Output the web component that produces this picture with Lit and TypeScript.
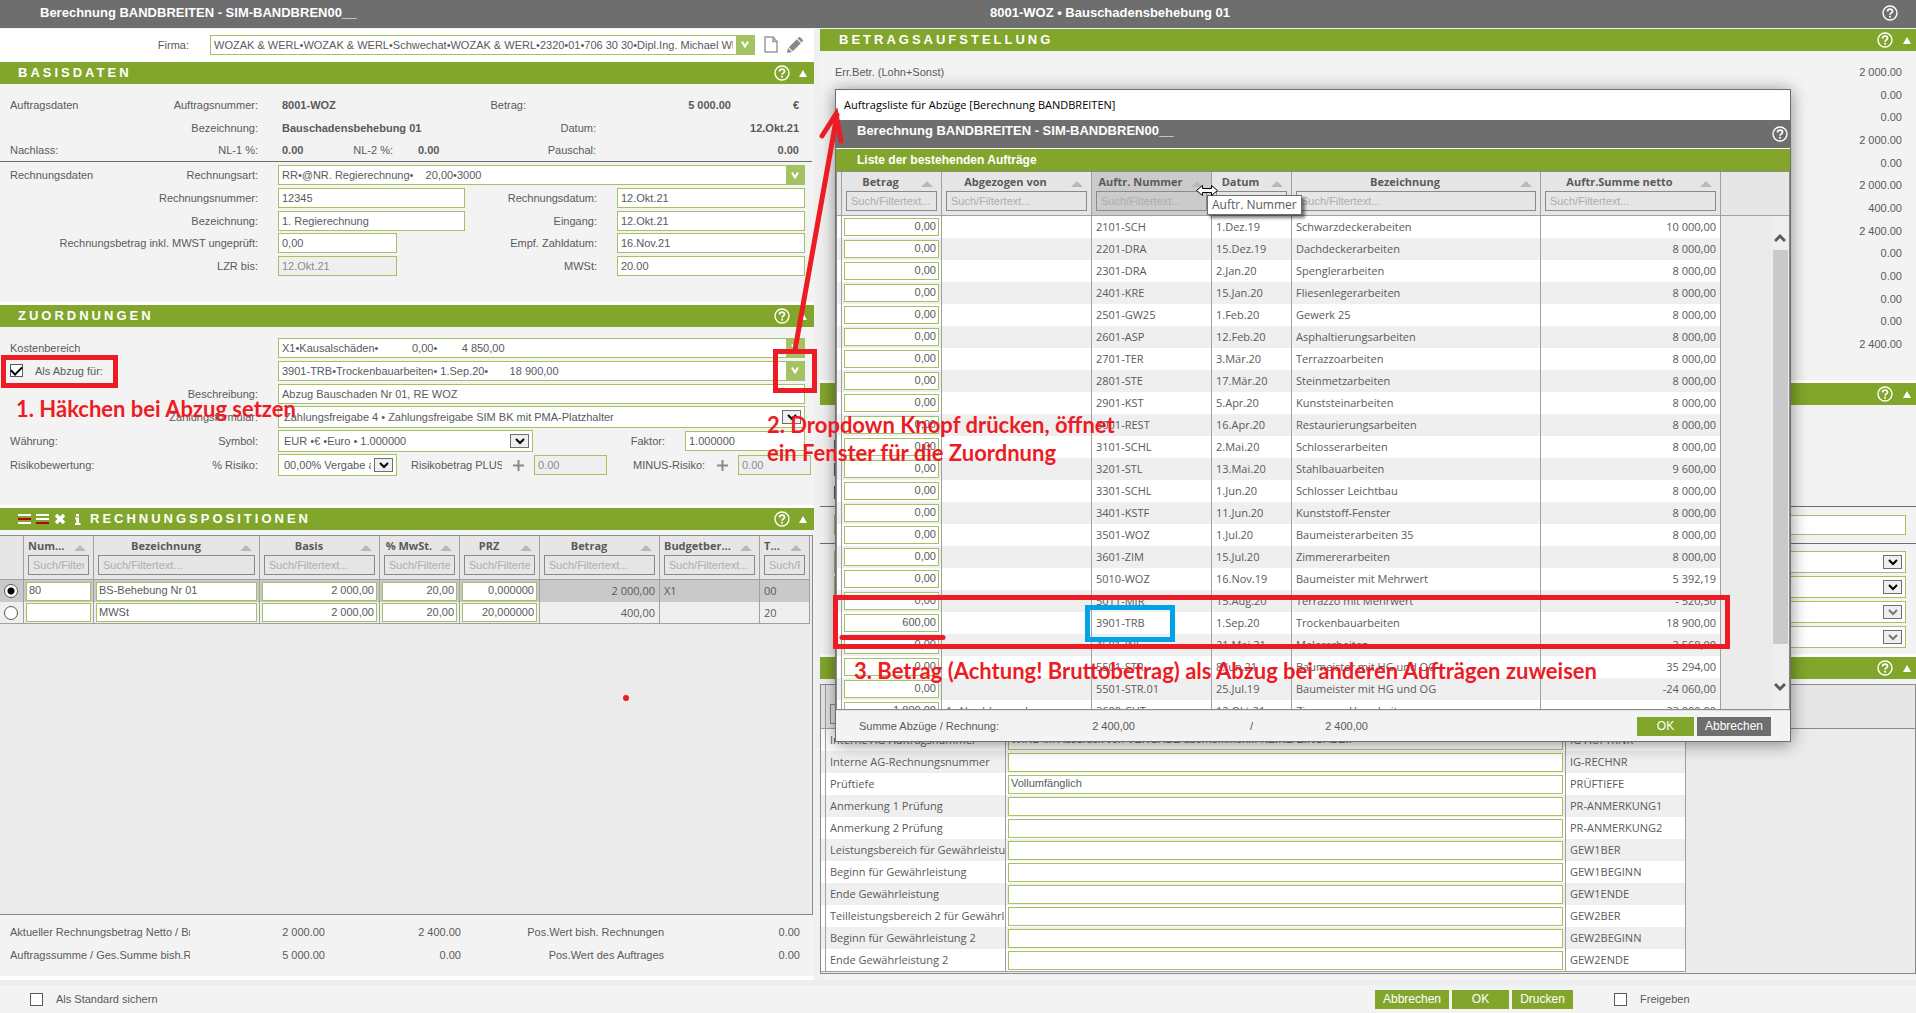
import { LitElement, html, css, svg, nothing } from "lit";
import { customElement, state } from "lit/decorators.js";
import { classMap } from "lit/directives/class-map.js";
import { styleMap } from "lit/directives/style-map.js";

const NB = "\u00a0";

interface Order {
  amount: string;
  from?: string;
  nr: string;
  date: string;
  name: string;
  sum: string;
}

const o = (nr: string, date: string, name: string, sum: string, amount = "0,00", from = ""): Order => ({
  nr, date, name, sum, amount, from,
});

const ORDERS: Order[] = [
  o("2101-SCH", "1.Dez.19", "Schwarzdeckerabeiten", "10 000,00"),
  o("2201-DRA", "15.Dez.19", "Dachdeckerarbeiten", "8 000,00"),
  o("2301-DRA", "2.Jan.20", "Spenglerarbeiten", "8 000,00"),
  o("2401-KRE", "15.Jan.20", "Fliesenlegerarbeiten", "8 000,00"),
  o("2501-GW25", "1.Feb.20", "Gewerk 25", "8 000,00"),
  o("2601-ASP", "12.Feb.20", "Asphaltierungsarbeiten", "8 000,00"),
  o("2701-TER", "3.Mär.20", "Terrazzoarbeiten", "8 000,00"),
  o("2801-STE", "17.Mär.20", "Steinmetzarbeiten", "8 000,00"),
  o("2901-KST", "5.Apr.20", "Kunststeinarbeiten", "8 000,00"),
  o("3001-REST", "16.Apr.20", "Restaurierungsarbeiten", "8 000,00"),
  o("3101-SCHL", "2.Mai.20", "Schlosserarbeiten", "8 000,00"),
  o("3201-STL", "13.Mai.20", "Stahlbauarbeiten", "9 600,00"),
  o("3301-SCHL", "1.Jun.20", "Schlosser Leichtbau", "8 000,00"),
  o("3401-KSTF", "11.Jun.20", "Kunststoff-Fenster", "8 000,00"),
  o("3501-WOZ", "1.Jul.20", "Baumeisterarbeiten 35", "8 000,00"),
  o("3601-ZIM", "15.Jul.20", "Zimmererarbeiten", "8 000,00"),
  o("5010-WOZ", "16.Nov.19", "Baumeister mit Mehrwert", "5 392,19"),
  o("5011-MIR", "15.Aug.20", "Terrazzo mit Mehrwert", "- 520,50"),
  o("3901-TRB", "1.Sep.20", "Trockenbauarbeiten", "18 900,00", "600,00"),
  o("4501-INL", "21.Mai.21", "Malerarbeiten", "3 568,00"),
  o("5501-STR", "8.Jun.21", "Baumeister mit HG und OG", "35 294,00"),
  o("5501-STR.01", "25.Jul.19", "Baumeister mit HG und OG", "-24 060,00"),
  o("3600-CHT", "12.Okt.21", "Zimmerer Vorarbeiten", "-23 000,00", "1 800,00", "1. Abschlagsrechnung"),
];

const FIELDS: [string, string, string][] = [
  ["Interne AG-Auftragsnummer", "WIRD im Ausdruck von VERGABE übernommen... KEINE EINGABE..", "IG-AUFTRNR"],
  ["Interne AG-Rechnungsnummer", "", "IG-RECHNR"],
  ["Prüftiefe", "Vollumfänglich", "PRÜFTIEFE"],
  ["Anmerkung 1 Prüfung", "", "PR-ANMERKUNG1"],
  ["Anmerkung 2 Prüfung", "", "PR-ANMERKUNG2"],
  ["Leistungsbereich für Gewährleistung", "", "GEW1BER"],
  ["Beginn für Gewährleistung", "", "GEW1BEGINN"],
  ["Ende Gewährleistung", "", "GEW1ENDE"],
  ["Teilleistungsbereich 2 für Gewährleistung", "", "GEW2BER"],
  ["Beginn für Gewährleistung 2", "", "GEW2BEGINN"],
  ["Ende Gewährleistung 2", "", "GEW2ENDE"],
];

const TOTALS = ["2 000.00", "0.00", "0.00", "2 000.00", "0.00", "2 000.00", "400.00", "2 400.00", "0.00", "0.00", "0.00", "0.00", "2 400.00"];

const POSITIONS = [
  { nr: "80", name: "BS-Behebung Nr 01", base: "2 000,00", vat: "20,00", prz: "0,000000", sum: "2 000,00", budget: "X1", t: "00" },
  { nr: "", name: "MWSt", base: "2 000,00", vat: "20,00", prz: "20,000000", sum: "400,00", budget: "", t: "20" },
];

const helpIcon = svg`<svg viewBox="0 0 16 16" width="16" height="16" fill="none" stroke="#fff" aria-hidden="true">
  <circle cx="8" cy="8" r="7" stroke-width="1.4"/>
  <path d="M5.6 6.4C5.6 4.8 6.6 4.1 8 4.1s2.5.8 2.5 2.1c0 1.7-2.4 1.7-2.4 3.5" stroke-width="1.8"/>
  <rect x="7.2" y="10.8" width="1.8" height="1.8" fill="#fff" stroke="none"/></svg>`;
const upIcon = svg`<svg viewBox="0 0 8 7" width="8" height="7" fill="#fff" aria-hidden="true"><path d="M4 0l4 7H0z"/></svg>`;
const sortIcon = svg`<svg class="sort" viewBox="0 0 12 6" width="12" height="6" fill="#b9b9b9" aria-hidden="true"><path d="M6 0l6 6H0z"/></svg>`;
const plusIcon = svg`<svg viewBox="0 0 11 11" width="11" height="11" stroke="#8a8a8a" stroke-width="2" aria-hidden="true"><path d="M5.500 0v11M0 5.500h11"/></svg>`;
const vIcon = svg`<svg viewBox="0 0 8 7" width="8" height="7" fill="none" stroke="#fff" stroke-width="2" aria-hidden="true"><path d="M1 .5l3 5 3-5"/></svg>`;
const chevIcon = svg`<svg viewBox="0 0 10 7" width="10" height="7" fill="none" stroke="currentColor" stroke-width="2" aria-hidden="true"><path d="M1 1l4 4 4-4"/></svg>`;

@customElement("app-root")
export class AppRoot extends LitElement {
  @state() private selected = 0;

  static styles = css`
    :host { display: block; font-family: "Liberation Sans", Arial, sans-serif; font-size: 11px; color: #5a5a5a; }
    * { box-sizing: border-box; }
    button, input, select { font: inherit; color: inherit; margin: 0; min-width: 0; border-radius: 0; }
    button { padding: 0; border: 0; background: none; display: inline-flex; align-items: center; justify-content: center; }
    .page { position: relative; min-height: 100vh; display: flex; flex-direction: column; background: #f3f3f3; overflow: hidden; }
    .topbar { height: 29px; background: #6e6e6e; border-bottom: 1px solid #f3f3f3; color: #fff; font-weight: bold; font-size: 13px;
      display: grid; grid-template-columns: 950fr 886fr 28px; align-items: center; padding: 0 12px 3px 40px; }
    .main { flex: 1; display: grid; grid-template-columns: 814fr 1096fr; column-gap: 6px; background: #f0f0f0; }
    .col { display: flex; flex-direction: column; min-width: 0; background: #f3f3f3; }
    .company { height: 33px; background: #fff; display: flex; align-items: center; padding: 0 11px 2px 0; }
    .company label { width: 210px; padding-right: 21px; text-align: right; }
    .company .combo { flex: 1; }
    .company .ic { margin-left: 9px; }
    .sechead { height: 22px; background: #82a62b; color: #fff; display: flex; align-items: center; padding: 0 7px 0 18px; }
    .sechead h2 { margin: 0; flex: 1; font-size: 13px; line-height: 22px; letter-spacing: 3px; font-weight: bold; }
    .sechead > button + button { margin-left: 9px; }
    .right .sechead { padding: 0 5px 0 19px; }
    .right .sechead > button + button { margin-left: 10px; }
    .tools { display: flex; gap: 5px; padding-right: 7px; align-items: center; }
    .sec { border-bottom: 3px solid #fff; }
    .data { display: grid; grid-auto-rows: 23px 23px 22px; padding-top: 9px; border-bottom: 1px solid #6e6e6e; margin-right: 2px; }
    .form1 { display: grid; grid-auto-rows: 22px 23px 23px; padding: 2px 0 25px; }
    .form2 { display: grid; grid-template-rows: 23px 23px 23px 24px 24px 24px; padding: 9px 0 28px; }
    .row { display: grid; grid-template-columns: 248px 187fr 112px 188fr; column-gap: 20px; padding: 0 9px 0 10px; align-items: center; }
    .lead { display: flex; justify-content: space-between; white-space: nowrap; }
    .lead .only { margin-left: auto; }
    .r { text-align: right; }
    .wide { grid-column: 2 / -1; }
    .bv { padding: 0 4px; font-weight: bold; }
    .sum1 { grid-column: 2 / -1; display: grid; grid-template-columns: 1fr auto 205px 68px; padding: 0 4px; }
    .nl { display: grid; grid-template-columns: 40px 75px 1fr; }
    .nl b:first-child { padding-left: 4px; }
    .nl b:last-child { padding-left: 25px; }
    .fld { height: 20px; width: 100%; border: 1px solid #a4c261; background: #fff; padding: 0 3px; outline: 0; }
    .fld:disabled { background: #efefef; color: #8c8c8c; }
    .w119 { width: 119px; }
    .combo { display: flex; height: 20px; border: 1px solid #a4c261; background: #fff; position: relative; min-width: 0; }
    .combo select { flex: 1; appearance: none; border: 0; background: none; outline: 0; padding: 0 3px; overflow: hidden; }
    .combo .v { width: 18px; background: #a4c261; display: flex; align-items: center; justify-content: center; pointer-events: none; }
    .combo.tall { height: 22px; }
    .combo.tall select { padding: 0 0 0 5px; }
    .combo .c { width: 19px; height: 14px; margin: 3px; border: 1px solid #6e6e6e; background: #efefef; color: #000;
      display: flex; align-items: center; justify-content: center; pointer-events: none; }
    .combo.off .c { color: #777; }
    .symbol { grid-column: 2 / -1; display: grid; grid-template-columns: 255fr 112fr 120fr; column-gap: 20px; align-items: center; }
    .symbol label { text-align: right; }
    .risk { grid-column: 2 / -1; display: flex; align-items: center; margin-right: -6px; white-space: nowrap; }
    .risk .cut { width: 91px; overflow: hidden; margin-left: 14px; }
    .risk .minus { margin-left: 26px; width: 73px; }
    .risk button { margin: 0 10px 0 11px; }
    .risk .fld { flex: 1; }
    .tick { appearance: none; width: 13px; height: 13px; border: 1px solid #5a5a5a; background: #fff; display: inline-grid; place-items: center; }
    .tick:checked::after { content: ""; width: 9px; height: 5px; border: solid #000; border-width: 0 0 2px 2px; transform: translateY(-1px) rotate(-45deg); }
    .deduct { display: flex; align-items: center; gap: 12px; }

    .gridbox { flex: 1; margin: 5px 1px 0 0; border: solid #8a8a8a; border-width: 1px 1px 1px 0; background: #ebebeb; min-width: 0; }
    table { border-collapse: separate; border-spacing: 0; table-layout: fixed; font-family: "Open Sans", "Noto Sans", sans-serif; font-size: 11px; }
    th { height: 44px; padding: 0 4px; background: #e6e6e6; border: solid #a0a0a0; border-width: 0 1px 1px 0; vertical-align: top; font-weight: bold; }
    th:first-child { padding: 0; }
    th.hot { background: #cbcbcb; }
    .ht { display: flex; align-items: center; height: 19px; padding-right: 4px; }
    .ht span { flex: 1; text-align: center; overflow: hidden; text-overflow: ellipsis; white-space: nowrap; margin-right: 6px; }
    .sort { flex: none; margin-top: 4px; }
    .filter { display: block; width: 100%; height: 20px; border: 1px solid #8a8a8a; background: transparent; padding: 0 4px;
      font-family: "Liberation Sans", Arial, sans-serif; font-weight: normal; outline: 0; }
    .filter::placeholder { color: #adadad; opacity: 1; }
    td { height: 22px; padding: 0 4px; border-right: 1px solid #a0a0a0; white-space: nowrap; overflow: hidden; line-height: 20px; }
    td.in { padding: 0 2px; }
    td.n { text-align: right; }
    td:first-child { padding: 0; }
    td .fld { display: block; height: 19px; font-family: "Liberation Sans", Arial, sans-serif; padding: 0 2px 2px; }
    td .fld.n { text-align: right; }
    .pos { width: 810px; }
    .pos .ht { padding-right: 3px; }
    .pos tr:last-child td { border-bottom: 1px solid #a0a0a0; }
    .pos td { background: #efefef; }
    .pos tr.sel td { background: #c9c9c9; }
    .pos td:first-child { padding: 0 4px; }
    .radio { appearance: none; display: block; width: 14px; height: 14px; border: 1px solid #555; border-radius: 50%; background: #fff; }
    .radio:checked { background: radial-gradient(circle, #000 0 3px, #fff 4px); }
    .foot { display: grid; grid-template-columns: 180px 135px 136px 203px 136px; grid-auto-rows: 23px; padding: 5px 0 10px 10px; height: 65px; align-items: center; border-bottom: 4px solid #fff; }
    .foot span { text-align: right; white-space: nowrap; overflow: hidden; }
    .foot span:first-child, .foot .l { text-align: left; }

    .totals { display: grid; grid-auto-rows: 23px 23px 22px; padding: 9px 14px 28px 15px; height: 329px; align-content: start; }
    .totals div { display: flex; justify-content: space-between; align-items: center; }
    .mid { height: 249px; padding-top: 35px; }
    .checks { display: flex; flex-direction: column; gap: 10px; padding: 0 14px 4px; height: 66px; }
    .line { border: solid #6e6e6e; border-width: 1px 0; height: 38px; padding: 8px 10px 0 14px; }
    .selects { display: flex; flex-direction: column; gap: 3px; padding: 7px 10px 0 14px; }
    .right .gridbox { border-left: 1px solid #8a8a8a; margin: 5px 0 6px; flex: 1; }
    .keys { width: 865px; border-bottom: 1px solid #a0a0a0; }
    .keys tr td { background: #fff; }
    .keys tr:nth-child(even) td { background: #efefef; }
    .keywrap { background: linear-gradient(#e6e6e6 0 43px, #8a8a8a 43px 44px, #ebebeb 44px); }
    .keywrap th { background: none; }

    .bottom { height: 33px; border-top: 5px solid #ededed; background: #f3f3f3; display: flex; align-items: center; padding: 0 10px 0 30px; }
    .bottom label { margin-left: 13px; }
    .btns { margin-left: auto; display: flex; gap: 3px; }
    .btn { height: 19px; background: #82a62b; color: #fff; font-size: 12px; width: 57px; }
    .btn.gray { background: #6e6e6e; }
    .btn.l { width: 74px; }
    .btn.m { width: 61px; }
    .free { width: 292px; margin-left: 41px; display: flex; align-items: center; }

    .dialog { position: absolute; left: 835px; right: 125px; top: 89px; height: 653px; border: 1px solid #6e6e6e; background: #f3f3f3;
      box-shadow: 0 2px 16px rgba(0, 0, 0, .45); display: flex; flex-direction: column; }
    .dtitle { height: 30px; background: #fff; color: #000; padding: 0 8px; line-height: 30px; font-family: "Open Sans", "Noto Sans", sans-serif; font-size: 11px; margin: 0; font-weight: normal; }
    .dbar { height: 29px; background: #6e6e6e; color: #fff; border-bottom: 1px solid #fff; display: flex; justify-content: space-between; align-items: center;
      padding: 0 2px 8px 21px; font-size: 13px; font-weight: bold; }
    .dbar button { margin-top: 8px; }
    .dsub { height: 22px; background: #82a62b; color: #fff; padding-left: 21px; font-size: 12px; font-weight: bold; line-height: 22px; }
    .dbody { flex: 1; display: flex; min-height: 0; overflow: hidden; border: 1px solid #8a8a8a; background: #ebebeb; position: relative; }
    .dtable { width: 100%; height: 100%; }
    .dtable tbody td { background: #fff; height: 22px; line-height: 20px; }
    .dtable tbody tr:nth-child(even) td { background: #efefef; }
    .dtable tbody tr td:last-child, .dtable tbody tr:nth-child(even) td:last-child { background: #ebebeb; border: 0; }
    .dtable th:last-child { border-right: 0; }
    .dtable td .fld { height: 18px; padding-bottom: 2px; }
    .dwrap { flex: 1; min-width: 0; height: 537px; overflow: hidden; }
    .scroll { position: absolute; right: 1px; top: 45px; bottom: 0; width: 16px; background: #efefef; display: flex; flex-direction: column; align-items: center; }
    .scroll svg { margin: 16px 0 7px; }
    .thumb { width: 15px; height: 394px; background: #c9c9c9; }
    .scroll .dn { margin: 38px 0 0; }
    .dfoot { height: 31px; display: grid; grid-template-columns: 180px 96px 118px 115px 1fr auto; align-items: center; padding: 0 19px 0 23px; border-top: 1px solid #e0e0e0; }

    .tip { position: absolute; left: 1207px; top: 195px; height: 20px; padding: 0 4px; background: #fff; border: 1px solid #6e6e6e; line-height: 18px;
      font-family: "Open Sans", "Noto Sans", sans-serif; font-size: 12px; box-shadow: 3px 3px 3px rgba(0, 0, 0, .5); }
    .marks { position: absolute; left: 0; top: 0; pointer-events: none; }
    .note { position: absolute; margin: 0; color: #ed1c24; font-family: Lato, "Open Sans", sans-serif; font-weight: bold; font-size: 22px; line-height: 28px; white-space: nowrap; pointer-events: none; }
    .n1 { left: 16px; top: 395px; }
    .n2 { left: 767px; top: 411px; }
    .n3 { left: 854px; top: 657px; }
  `;

  private head(title: string, tools: unknown = nothing) {
    return html`<header class="sechead">${tools}<h2>${title}</h2>
      <button aria-label="Hilfe">${helpIcon}</button><button aria-label="Einklappen">${upIcon}</button></header>`;
  }

  private combo(id: string, text: string, label: string | null = null, kind = "v", extra = "") {
    return html`<div class="combo ${kind === "v" ? "" : "tall"} ${extra}">
      <select id=${id} aria-label=${label ?? nothing}><option>${text}</option></select>
      <span class=${kind}>${kind === "v" ? vIcon : chevIcon}</span></div>`;
  }

  private th(title: string, hot = false) {
    return html`<th class=${classMap({ hot })}><div class="ht"><span>${title}</span>${sortIcon}</div>
      <input class="filter" placeholder="Such/Filtertext..." aria-label="Filter ${title}"></th>`;
  }

  private cols(widths: (number | null)[]) {
    return html`<colgroup>${widths.map((w) => html`<col style=${styleMap(w ? { width: `${w}px` } : {})}>`)}</colgroup>`;
  }

  private basis() {
    return html`<section class="sec">${this.head("BASISDATEN")}
      <div class="data">
        <div class="row"><div class="lead"><span>Auftragsdaten</span><span>Auftragsnummer:</span></div>
          <div class="sum1"><b>8001-WOZ</b><span>Betrag:</span><b class="r">5 000.00</b><b class="r">€</b></div></div>
        <div class="row"><div class="lead"><span class="only">Bezeichnung:</span></div><b class="bv">Bauschadensbehebung 01</b><span class="r">Datum:</span><b class="bv r">12.Okt.21</b></div>
        <div class="row"><div class="lead"><span>Nachlass:</span><span>NL-1 %:</span></div>
          <div class="nl"><b>0.00</b><span class="r">NL-2 %:</span><b>0.00</b></div><span class="r">Pauschal:</span><b class="bv r">0.00</b></div>
      </div>
      <div class="form1">
        <div class="row"><div class="lead"><span>Rechnungsdaten</span><label for="art">Rechnungsart:</label></div>
          <div class="wide">${this.combo("art", `RR•@NR. Regierechnung•${NB.repeat(4)}20,00•3000`)}</div></div>
        <div class="row"><div class="lead"><label class="only" for="renr">Rechnungsnummer:</label></div><input class="fld" id="renr" value="12345">
          <label class="r" for="redat">Rechnungsdatum:</label><input class="fld" id="redat" value="12.Okt.21"></div>
        <div class="row"><div class="lead"><label class="only" for="bez">Bezeichnung:</label></div><input class="fld" id="bez" value="1. Regierechnung">
          <label class="r" for="ein">Eingang:</label><input class="fld" id="ein" value="12.Okt.21"></div>
        <div class="row"><div class="lead"><label class="only" for="betr">Rechnungsbetrag inkl. MWST ungeprüft:</label></div><input class="fld w119" id="betr" value="0,00">
          <label class="r" for="zahl">Empf. Zahldatum:</label><input class="fld" id="zahl" value="16.Nov.21"></div>
        <div class="row"><div class="lead"><label class="only" for="lzr">LZR bis:</label></div><input class="fld w119" id="lzr" value="12.Okt.21" disabled>
          <label class="r" for="mwst">MWSt:</label><input class="fld" id="mwst" value="20.00"></div>
      </div></section>`;
  }

  private assign() {
    return html`<section class="sec">${this.head("ZUORDNUNGEN")}
      <div class="form2">
        <div class="row"><label for="kb">Kostenbereich</label><div class="wide">${this.combo("kb", `X1•Kausalschäden•${NB.repeat(11)}0,00•${NB.repeat(8)}4 850,00`)}</div></div>
        <div class="row"><div class="deduct"><input class="tick" type="checkbox" id="abz" checked><label for="abz">Als Abzug für:</label></div>
          <div class="wide">${this.combo("abzf", `3901-TRB•Trockenbauarbeiten• 1.Sep.20•${NB.repeat(7)}18 900,00`, "Abzug für")}</div></div>
        <div class="row"><div class="lead"><label class="only" for="besch">Beschreibung:</label></div><input class="fld wide" id="besch" value="Abzug Bauschaden Nr 01, RE WOZ"></div>
        <div class="row"><div class="lead"><label class="only" for="zf">Zahlungsformular:</label></div>
          <div class="wide">${this.combo("zf", "Zahlungsfreigabe 4 • Zahlungsfreigabe SIM BK mit PMA-Platzhalter", null, "c")}</div></div>
        <div class="row"><div class="lead"><span>Währung:</span><label for="sym">Symbol:</label></div>
          <div class="symbol">${this.combo("sym", "EUR •€ •Euro • 1.000000", null, "c")}<label for="fak">Faktor:</label><input class="fld" id="fak" value="1.000000"></div></div>
        <div class="row"><div class="lead"><span>Risikobewertung:</span><label for="ris">% Risiko:</label></div>
          <div class="risk">${this.combo("ris", "00,00% Vergabe aktuell", null, "c", "w119")}
            <label class="cut" for="rp">Risikobetrag PLUS:</label><button aria-label="Plus erhöhen">${plusIcon}</button><input class="fld" id="rp" value="0.00" disabled>
            <label class="minus" for="rm">MINUS-Risiko:</label><button aria-label="Minus erhöhen">${plusIcon}</button><input class="fld" id="rm" value="0.00" disabled></div></div>
      </div></section>`;
  }

  private positions() {
    const bars = (a: string, b: string, c: string) => svg`<svg viewBox="0 0 13 11" width="13" height="11" aria-hidden="true">
      <rect width="13" height="2" fill=${a}/><rect y="4" width="13" height="2" fill=${b}/><rect y="8" width="13" height="2" fill=${c}/></svg>`;
    const tools = html`<div class="tools">
      <button aria-label="Zeile einfügen">${bars("#fff", "#b80000", "#fff")}</button>
      <button aria-label="Zeile anhängen">${bars("#fff", "#fff", "#b80000")}</button>
      <button aria-label="Löschen"><svg viewBox="0 0 12 12" width="12" height="12" stroke="#fff" stroke-width="3.500" aria-hidden="true"><path d="M2 2l8 8M10 2l-8 8"/></svg></button>
      <button aria-label="Info"><svg viewBox="0 0 12 12" width="12" height="12" fill="#fff" aria-hidden="true"><path d="M5 1h3v2.500H5zM4 4.500h4V10h1.500v2H4v-2h1.200V6.300H4z"/></svg></button></div>`;
    return html`${this.head("RECHNUNGSPOSITIONEN", tools)}
      <div class="gridbox"><table class="pos">${this.cols([24, 70, 166, 120, 80, 80, 120, 100, 50])}
        <thead><tr><th></th>${["Nummer", "Bezeichnung", "Basis", "% MwSt.", "PRZ", "Betrag", "Budgetbereich", "Typ."].map((t) => this.th(t))}</tr></thead>
        <tbody>${POSITIONS.map((p, i) => html`<tr class=${classMap({ sel: i === this.selected })}>
          <td><input class="radio" type="radio" name="pos" aria-label="Position ${i + 1}" .checked=${i === this.selected} @change=${() => (this.selected = i)}></td>
          <td class="in"><input class="fld" aria-label="Nummer" value=${p.nr}></td><td class="in"><input class="fld" aria-label="Bezeichnung" value=${p.name}></td>
          ${[p.base, p.vat, p.prz].map((v, k) => html`<td class="in"><input class="fld n" aria-label=${["Basis", "MwSt.", "PRZ"][k]} value=${v}></td>`)}
          <td class="n">${p.sum}</td><td>${p.budget}</td><td>${p.t}</td></tr>`)}</tbody></table></div>
      <div class="foot"><span>Aktueller Rechnungsbetrag Netto / Brutto</span><span>2 000.00</span><span>2 400.00</span><span>Pos.Wert bish. Rechnungen</span><span>0.00</span>
        <span class="l">Auftragssumme / Ges.Summe bish.Rechn.</span><span>5 000.00</span><span>0.00</span><span>Pos.Wert des Auftrages</span><span>0.00</span></div>`;
  }

  private rightCol() {
    return html`<div class="col right">
      <section class="sec">${this.head("BETRAGSAUFSTELLUNG")}
        <div class="totals">${TOTALS.map((t, i) => html`<div><span>${i === 0 ? "Err.Betr. (Lohn+Sonst)" : ""}</span><span>${t}</span></div>`)}</div></section>
      <section class="sec">${this.head("")}
        <div class="mid"><div class="checks">${[1, 2, 3].map((n) => html`<input class="tick" type="checkbox" aria-label="Option ${n}">`)}</div>
          <div class="line"><input class="fld" aria-label="Bemerkung"></div>
          <div class="selects">${[0, 1, 2, 3].map((n) => this.combo(`s${n}`, "", `Auswahl ${n + 1}`, "c", n > 1 ? "off" : ""))}</div></div></section>
      ${this.head("")}
      <div class="gridbox keywrap"><table class="keys">${this.cols([5, 180, 560, 120])}
        <thead><tr><th></th><th><div class="ht"></div><input class="filter" aria-label="Filter Feld"></th><th></th><th></th></tr></thead>
        <tbody>${FIELDS.map(([a, b, c]) => html`<tr><td></td><td>${a}</td><td class="in"><input class="fld" aria-label=${a} value=${b}></td><td>${c}</td></tr>`)}</tbody></table></div>
    </div>`;
  }

  private dialog() {
    return html`<section class="dialog" role="dialog" aria-labelledby="dt">
      <h1 class="dtitle" id="dt">Auftragsliste für Abzüge [Berechnung BANDBREITEN]</h1>
      <div class="dbar"><span>Berechnung BANDBREITEN - SIM-BANDBREN00__</span><button aria-label="Hilfe">${helpIcon}</button></div>
      <div class="dsub">Liste der bestehenden Aufträge</div>
      <div class="dbody"><div class="dwrap"><table class="dtable">${this.cols([5, 100, 150, 120, 80, null, 180, 68])}
        <thead><tr><th></th>${this.th("Betrag")}${this.th("Abgezogen von")}${this.th("Auftr. Nummer", true)}${this.th("Datum")}${this.th("Bezeichnung")}${this.th("Auftr.Summe netto")}<th></th></tr></thead>
        <tbody>${ORDERS.map((r) => html`<tr><td></td><td class="in"><input class="fld n" aria-label="Betrag ${r.nr}" value=${r.amount}></td><td>${r.from}</td>
          <td>${r.nr}</td><td>${r.date}</td><td>${r.name}</td><td class="n">${r.sum}</td><td></td></tr>`)}</tbody></table></div>
        <div class="scroll"><svg viewBox="0 0 12 10" width="12" height="10" fill="none" stroke="#5a5a5a" stroke-width="3" aria-hidden="true"><path d="M1 8l5-5 5 5"/></svg>
          <div class="thumb"></div><svg class="dn" viewBox="0 0 12 10" width="12" height="10" fill="none" stroke="#5a5a5a" stroke-width="3" aria-hidden="true"><path d="M1 2l5 5 5-5"/></svg></div>
      </div>
      <div class="dfoot"><span>Summe Abzüge / Rechnung:</span><span class="r">2 400,00</span><span class="r">/</span><span class="r">2 400,00</span><span></span>
        <div class="btns"><button class="btn">OK</button><button class="btn gray l">Abbrechen</button></div></div>
    </section>
    <div class="tip" role="tooltip">Auftr. Nummer</div>`;
  }

  render() {
    return html`<div class="page">
      <header class="topbar"><span>Berechnung BANDBREITEN - SIM-BANDBREN00__</span><span>8001-WOZ • Bauschadensbehebung 01</span><button aria-label="Hilfe">${helpIcon}</button></header>
      <main class="main">
        <div class="col">
          <div class="company"><label for="firma">Firma:</label>
            ${this.combo("firma", "WOZAK & WERL•WOZAK & WERL•Schwechat•WOZAK & WERL•2320•01•706 30 30•Dipl.Ing. Michael WERL")}
            <button class="ic" aria-label="Neu"><svg viewBox="0 0 14 17" width="14" height="17" fill="#fff" stroke="#9a9a9a" stroke-width="1.500" aria-hidden="true"><path d="M1 1h8l4 4.500V16H1zM9 1v4.500h4"/></svg></button>
            <button class="ic" aria-label="Bearbeiten"><svg viewBox="0 0 16 16" width="16" height="16" fill="#8a8a8a" aria-hidden="true"><path d="M0 16l1-5 4 4zM1.800 10.200l8-8 4 4-8 8zM10.600 1.400L12 0q1 0 1.500.500l2 2Q16 3 16 4l-1.400 1.400z"/></svg></button></div>
          ${this.basis()}${this.assign()}${this.positions()}
        </div>
        ${this.rightCol()}
      </main>
      <footer class="bottom"><input class="tick" type="checkbox" id="std"><label for="std">Als Standard sichern</label>
        <div class="btns"><button class="btn l">Abbrechen</button><button class="btn">OK</button><button class="btn m">Drucken</button></div>
        <div class="free"><input class="tick" type="checkbox" id="frei"><label for="frei">Freigeben</label></div></footer>
      ${this.dialog()}
      <svg class="marks" width="1740" height="710" fill="none" stroke="#ed1c24" stroke-width="5" aria-hidden="true">
        <rect x="3.500" y="357.500" width="112" height="28"/><rect x="775.500" y="351.500" width="39" height="39"/>
        <path d="M795 350L837 115M822 136l14-22 5 27" stroke-linecap="round"/>
        <rect x="835.500" y="597.500" width="892" height="49"/>
        <path d="M842 637.500h101" stroke-linecap="round"/>
        <rect x="1087.500" y="607.500" width="85" height="32" stroke="#00a2e8"/>
        <circle cx="626" cy="698" r="3" fill="#ed1c24" stroke="none"/>
        <path d="M1196.500 190.500l6-5v3h9v-3l6 5-6 5v-3h-9v3z" fill="#fff" stroke="#000" stroke-width="1"/>
      </svg>
      <p class="note n1">1. Häkchen bei Abzug setzen</p>
      <p class="note n2">2. Dropdown Knopf drücken, öffnet<br>ein Fenster für die Zuordnung</p>
      <p class="note n3">3. Betrag (Achtung! Bruttobetrag) als Abzug bei anderen Aufträgen zuweisen</p>
    </div>`;
  }
}
